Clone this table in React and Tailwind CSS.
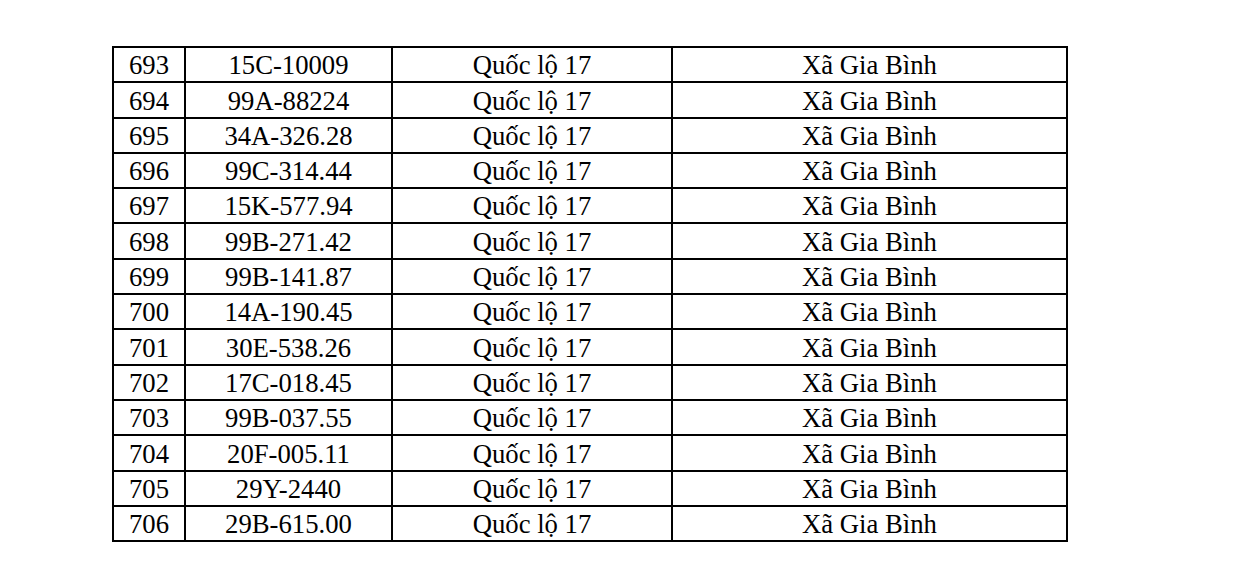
const rows = [
  ["693", "15C-10009"],
  ["694", "99A-88224"],
  ["695", "34A-326.28"],
  ["696", "99C-314.44"],
  ["697", "15K-577.94"],
  ["698", "99B-271.42"],
  ["699", "99B-141.87"],
  ["700", "14A-190.45"],
  ["701", "30E-538.26"],
  ["702", "17C-018.45"],
  ["703", "99B-037.55"],
  ["704", "20F-005.11"],
  ["705", "29Y-2440"],
  ["706", "29B-615.00"],
];

export default function App() {
  return (
    <div className="w-[1240px] h-[586px] bg-white pt-[46px] pl-[112px] text-black font-['Liberation_Serif','Times_New_Roman',serif] text-[26.7px] leading-none">
      <table className="border-collapse table-fixed w-[954px]">
        <colgroup>
          <col className="w-[72px]" />
          <col className="w-[207px]" />
          <col className="w-[280px]" />
          <col className="w-[395px]" />
        </colgroup>
        <tbody>
          {rows.map(([no, plate]) => (
            <tr key={no} className="h-[35.3px]">
              <td className="border-2 border-black text-center p-0 pt-[2px]">{no}</td>
              <td className="border-2 border-black text-center p-0 pt-[2px]">{plate}</td>
              <td className="border-2 border-black text-center p-0 pt-[2px]">Quốc lộ 17</td>
              <td className="border-2 border-black text-center p-0 pt-[2px]">Xã Gia Bình</td>
            </tr>
          ))}
        </tbody>
      </table>
    </div>
  );
}
